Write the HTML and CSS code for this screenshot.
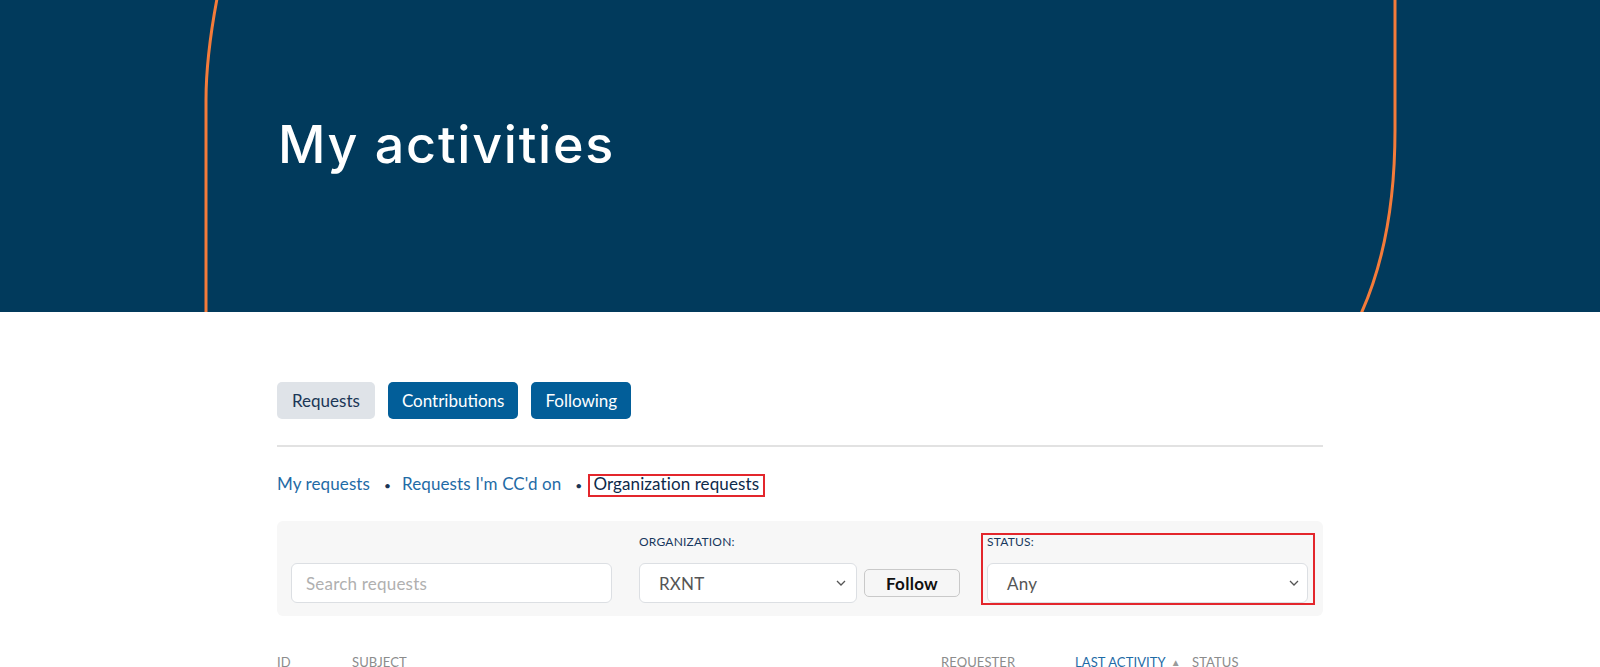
FILE: index.html
```html
<!DOCTYPE html>
<html lang="en">
<head>
<meta charset="utf-8">
<title>My activities</title>
<link rel="stylesheet" href="styles.css">
</head>
<body>
<header class="hero">
  <svg class="hero-arc" width="1600" height="312" viewBox="0 0 1600 312" aria-hidden="true">
    <path d="M217.5,-4 C209.5,38 206,68 206,100 L206,316" />
    <path d="M1395,-4 L1395,130 C1395,200 1385,262 1360,316" />
  </svg>
  <div class="container">
    <h1 class="hero-title">My activities</h1>
  </div>
</header>

<main class="container">
  <nav class="tabs">
    <a class="tab tab-active" href="#">Requests</a>
    <a class="tab" href="#">Contributions</a>
    <a class="tab" href="#">Following</a>
  </nav>
  <hr class="divider">

  <ul class="sublinks">
    <li><a href="#">My requests</a></li>
    <li><a href="#">Requests I'm CC'd on</a></li>
    <li class="current"><span class="current-box">Organization requests</span></li>
  </ul>

  <form class="filters">
    <div class="field">
      <div class="input placeholder">Search requests</div>
    </div>
    <div class="field">
      <label class="field-label">ORGANIZATION:</label>
      <div class="org-row">
        <div class="select select-org"><span>RXNT</span>
          <svg class="chev" width="10" height="6" viewBox="0 0 10 6"><path d="M1,1 L5,5 L9,1"/></svg>
        </div>
        <button class="follow" type="button">Follow</button>
      </div>
    </div>
    <div class="field field-status">
      <label class="field-label">STATUS:</label>
      <div class="select"><span>Any</span>
        <svg class="chev" width="10" height="6" viewBox="0 0 10 6"><path d="M1,1 L5,5 L9,1"/></svg>
      </div>
    </div>
  </form>

  <div class="table-head">
    <span>ID</span>
    <span>SUBJECT</span>
    <span>REQUESTER</span>
    <span class="sorted">LAST ACTIVITY <span class="sort-arrow">&#9650;</span></span>
    <span>STATUS</span>
  </div>
</main>
</body>
</html>
```

FILE: styles.css
```css
* { box-sizing: border-box; }

html, body {
  margin: 0;
  padding: 0;
  background: #ffffff;
  font-family: Lato, "Open Sans", Arial, sans-serif;
  font-size: 17px;
  letter-spacing: 0.2px;
  color: #1b3656;
  overflow: hidden;
}

.container {
  width: 1046px;
  margin: 0 auto;
}

/* Hero */
.hero {
  position: relative;
  height: 312px;
  background: #013a5c;
  padding-top: 115px;
  overflow: hidden;
}

.hero-arc {
  position: absolute;
  left: 0;
  top: 0;
}

.hero-arc path {
  fill: none;
  stroke: #f47b3a;
  stroke-width: 3;
}

.hero-title {
  position: relative;
  margin: 0 0 0 1px;
  font-family: Inter, "Open Sans", sans-serif;
  font-weight: 500;
  font-size: 52px;
  line-height: 60px;
  color: #ffffff;
  letter-spacing: 1.75px;
}

/* Tabs */
.tabs {
  display: flex;
  gap: 13px;
  margin-top: 70px;
}

.tab {
  display: block;
  padding: 8px 14px;
  line-height: 21px;
  border-radius: 5px;
  background: #025e99;
  color: #ffffff;
  text-decoration: none;
  font-size: 17px;
  letter-spacing: 0;
}

.tab-active {
  background: #dfe3e8;
  color: #1b3656;
  padding: 8px 15px;
}

.divider {
  margin: 26px 0 0 0;
  border: 0;
  height: 2px;
  background: #e2e2e2;
}

/* Sub links */
.sublinks {
  list-style: none;
  margin: 25px 0 0 0;
  padding: 0;
  display: flex;
  line-height: 24px;
  letter-spacing: 0.1px;
}

.sublinks li + li::before {
  content: "\2022";
  display: inline-block;
  margin: 0 11px 0 14px;
  color: #1b3656;
  font-size: 12px;
}

.sublinks a {
  color: #1f6ba6;
  text-decoration: none;
}

.current-box {
  display: inline-block;
  border: 2px solid #e3262c;
  padding: 0 4px 3px 3px;
  margin-left: -5px;
  line-height: 16px;
  color: #0d2a4a;
}

/* Filters */
.filters {
  margin-top: 23px;
  background: #f7f7f7;
  border-radius: 6px;
  padding: 13px 14px;
  display: grid;
  grid-template-columns: 321px 321px 321px;
  column-gap: 27px;
  align-items: end;
}

.field {
  display: flex;
  flex-direction: column;
}

.field-label {
  font-size: 12px;
  line-height: 16px;
  color: #17375e;
  margin-bottom: 13px;
  letter-spacing: 0.2px;
}

.input,
.select {
  height: 40px;
  background: #ffffff;
  border: 1px solid #dcdfe3;
  border-radius: 6px;
  display: flex;
  align-items: center;
  font-size: 17px;
}

.input {
  padding-left: 14px;
}

.placeholder {
  color: #b0b0b0;
}

.select {
  justify-content: space-between;
  padding: 0 8px 0 19px;
  color: #555555;
}

.select-org {
  width: 218px;
  padding-right: 10px;
}

.chev path {
  fill: none;
  stroke: #555555;
  stroke-width: 1.3;
}

.org-row {
  display: flex;
  align-items: center;
  gap: 7px;
}

.follow {
  width: 96px;
  height: 28px;
  background: #f6f6f6;
  border: 1px solid #c9c9c9;
  border-radius: 5px;
  font-family: Lato, "Open Sans", sans-serif;
  font-weight: 700;
  font-size: 17px;
  letter-spacing: 0.3px;
  color: #111111;
  padding: 0;
}

.field-status {
  position: relative;
}

.field-status::after {
  content: "";
  position: absolute;
  top: -1px;
  bottom: -2px;
  left: -6px;
  right: -7px;
  border: 2px solid #e3262c;
  pointer-events: none;
}

/* Table head */
.table-head {
  margin-top: 38px;
  display: grid;
  grid-template-columns: 75px 589px 134px 117px 1fr;
  font-size: 13px;
  line-height: 16px;
  color: #8c8c8c;
  letter-spacing: 0.1px;
}

.sorted {
  color: #1f6ba6;
}

.sort-arrow {
  color: #9a9a9a;
  font-size: 10px;
  vertical-align: 1px;
  margin-left: 2px;
}
```
